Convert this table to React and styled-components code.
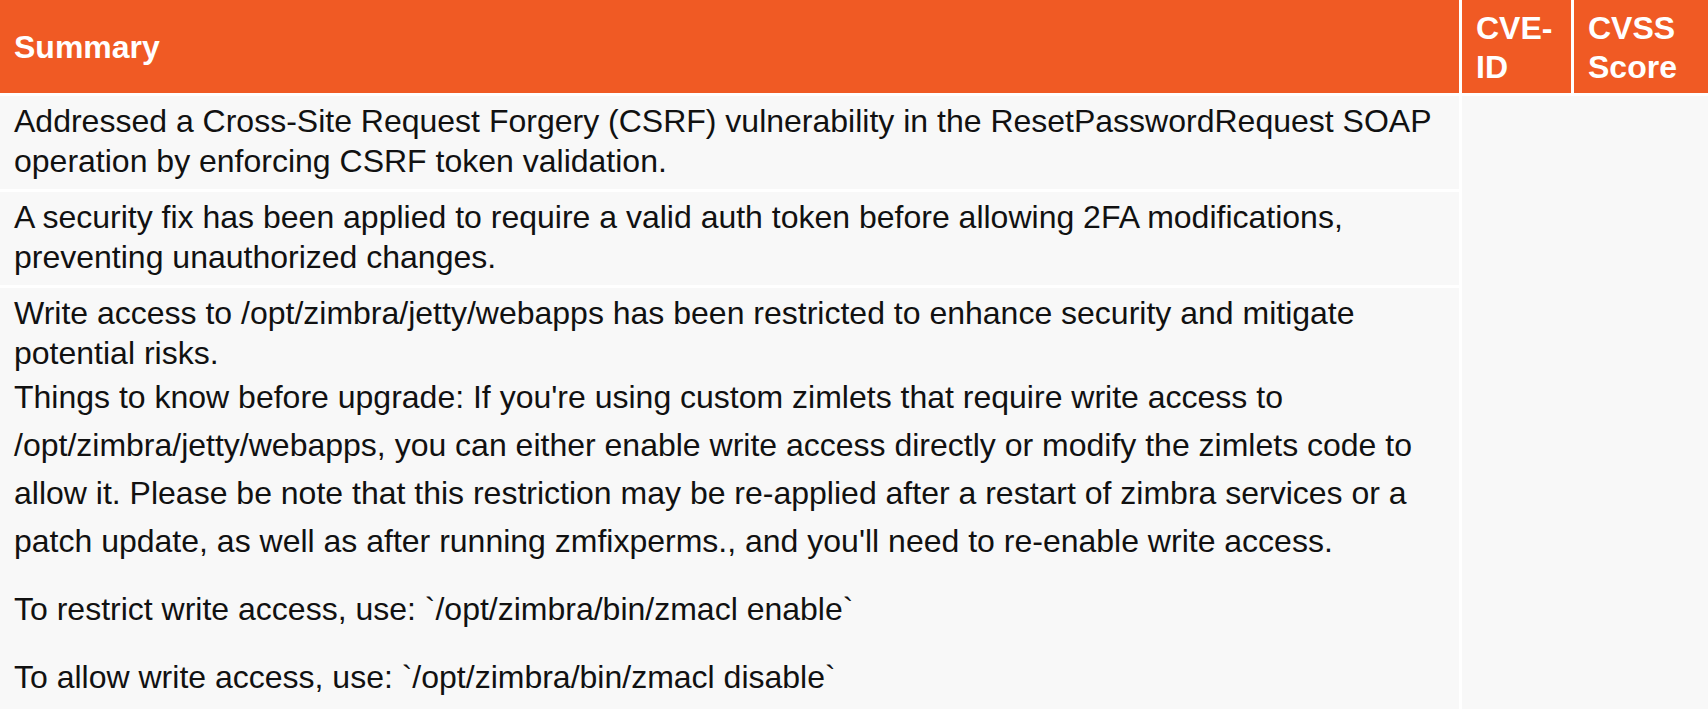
import React from "react";
import styled, { createGlobalStyle } from "styled-components";

const GlobalStyle = createGlobalStyle`
  * {
    box-sizing: border-box;
  }
  body {
    margin: 0;
    background: #fff;
    overflow: hidden;
    font-family: "Liberation Sans", Arial, Helvetica, sans-serif;
  }
`;

const Table = styled.table`
  width: 1720px;
  margin: -3px 0 0 -3px;
  border-collapse: separate;
  border-spacing: 3px;
  table-layout: fixed;
  font-size: 32px;
  color: #111;
`;

const HeadCell = styled.th`
  width: ${(p) => p.$w}px;
  height: 93px;
  padding: 6px 14px 4px;
  background: #f05a24;
  color: #fff;
  font-weight: bold;
  text-align: left;
  vertical-align: middle;
  line-height: 1.2;
`;

const SummaryCell = styled.td`
  padding: 5px 14px 8px;
  background: #f8f8f8;
  vertical-align: top;
  line-height: 1.25;
`;

// the CVE-ID / CVSS columns are empty, one grey block down the side
const EmptyCell = styled.td`
  background: #f8f8f8;
`;

const Note = styled.p`
  margin: ${(p) => (p.$spaced ? "20px 0 0" : "0")};
  line-height: 1.5;
`;

const rows = [
  "Addressed a Cross-Site Request Forgery (CSRF) vulnerability in the ResetPasswordRequest SOAP operation by enforcing CSRF token validation.",
  "A security fix has been applied to require a valid auth token before allowing 2FA modifications, preventing unauthorized changes.",
];

function App() {
  return (
    <>
      <GlobalStyle />
      <Table>
        <thead>
          <tr>
            <HeadCell $w={1459}>Summary</HeadCell>
            <HeadCell $w={109}>CVE-ID</HeadCell>
            <HeadCell $w={140}>CVSS Score</HeadCell>
          </tr>
        </thead>
        <tbody>
          <tr>
            <SummaryCell>{rows[0]}</SummaryCell>
            <EmptyCell colSpan={2} rowSpan={3} />
          </tr>
          <tr>
            <SummaryCell>{rows[1]}</SummaryCell>
          </tr>
          <tr>
            <SummaryCell>
              Write access to /opt/zimbra/jetty/webapps has been restricted to enhance security and mitigate potential risks.
              <Note>
                Things to know before upgrade: If you're using custom zimlets that require write access to /opt/zimbra/jetty/webapps, you can either enable write access directly or modify the zimlets code to allow it. Please be note that this restriction may be re-applied after a restart of zimbra services or a patch update, as well as after running zmfixperms., and you'll need to re-enable write access.
              </Note>
              <Note $spaced>To restrict write access, use: `/opt/zimbra/bin/zmacl enable`</Note>
              <Note $spaced>To allow write access, use: `/opt/zimbra/bin/zmacl disable`</Note>
            </SummaryCell>
          </tr>
        </tbody>
      </Table>
    </>
  );
}

export default App;
